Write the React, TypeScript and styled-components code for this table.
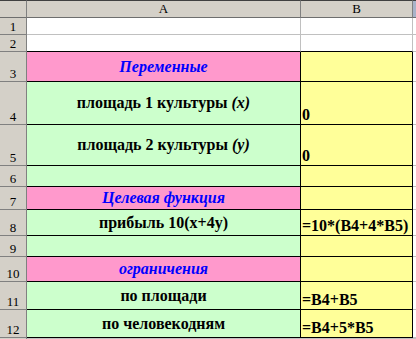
import React from 'react';
import styled, { createGlobalStyle } from 'styled-components';

type Kind = 'blank' | 'title' | 'data';

interface SheetRow {
  n: number;
  height: number;
  kind: Kind;
  a?: React.ReactNode;
  b?: string;
}

const rows: SheetRow[] = [
  { n: 1, height: 17, kind: 'blank' },
  { n: 2, height: 17, kind: 'blank' },
  { n: 3, height: 30, kind: 'title', a: 'Переменные' },
  {
    n: 4,
    height: 43,
    kind: 'data',
    a: (
      <>
        площадь 1 культуры{' '}<i>(x)</i>
      </>
    ),
    b: '0'
  },
  {
    n: 5,
    height: 41,
    kind: 'data',
    a: (
      <>
        площадь 2 культуры{' '}<i>(y)</i>
      </>
    ),
    b: '0'
  },
  { n: 6, height: 21, kind: 'data' },
  { n: 7, height: 23, kind: 'title', a: 'Целевая функция' },
  { n: 8, height: 26, kind: 'data', a: 'прибыль 10(x+4y)', b: '=10*(B4+4*B5)' },
  { n: 9, height: 21, kind: 'data' },
  { n: 10, height: 25, kind: 'title', a: 'ограничения' },
  { n: 11, height: 28, kind: 'data', a: 'по площади', b: '=B4+B5' },
  { n: 12, height: 28, kind: 'data', a: 'по человекодням', b: '=B4+5*B5' }
];

const PINK = '#ff99cc';
const GREEN = '#ccffcc';
const YELLOW = '#ffff99';
const GRID = '#c0c0c0';
const INK = '#000000';

const App: React.FC = () => {
  const template = `18px ${rows.map((r) => `${r.height}px`).join(' ')} 1fr`;

  return (
    <>
      <GlobalStyle />
      <Sheet $rows={template}>
        {/* column headers */}
        <Corner />
        <ColHeader>A</ColHeader>
        <ColHeader>B</ColHeader>
        <NextColHeader />

        {rows.map((row, i) => {
          const next = rows[i + 1];
          const filled = row.kind !== 'blank';
          const bottom = filled || (next && next.kind !== 'blank') ? INK : GRID;
          const aBg = row.kind === 'title' ? PINK : row.kind === 'data' ? GREEN : '#fff';

          return (
            <React.Fragment key={row.n}>
              <RowHeader>{row.n}</RowHeader>
              <Cell
                $bg={aBg}
                $right={filled ? INK : GRID}
                $bottom={bottom}
                $center
                $title={row.kind === 'title'}
              >
                {row.a}
              </Cell>
              <Cell $bg={filled ? YELLOW : '#fff'} $right={filled ? INK : GRID} $bottom={bottom}>
                {row.b}
              </Cell>
              <Spare />
            </React.Fragment>
          );
        })}

        <RowHeader $last />
        <Cell $bg="#fff" $right={GRID} $bottom={GRID} />
        <Cell $bg="#fff" $right={GRID} $bottom={GRID} />
        <Spare />
      </Sheet>
    </>
  );
};

const GlobalStyle = createGlobalStyle`
  html, body {
    margin: 0;
    padding: 0;
    background: #ffffff;
    overflow: hidden;
  }
`;

const Sheet = styled.div<{ $rows: string }>`
  display: grid;
  grid-template-columns: 27px 274px 112px 1fr;
  grid-template-rows: ${(p) => p.$rows};
  width: 416px;
  height: 339px;
  overflow: hidden;
  font-family: 'Liberation Serif', 'Times New Roman', serif;
`;

const HeaderBase = styled.div`
  box-sizing: border-box;
  background: #d4d0c8;
  border-top: 1px solid #404040;
  border-bottom: 1px solid #6e6e6e;
  border-right: 1px solid #808080;
`;

const Corner = styled(HeaderBase)``;

const ColHeader = styled(HeaderBase)`
  display: flex;
  align-items: center;
  justify-content: center;
  font-size: 13px;
  line-height: 16px;
  color: #000;
`;

const NextColHeader = styled(HeaderBase)`
  background: #a9b3c9;
  border-right: none;
`;

const RowHeader = styled.div<{ $last?: boolean }>`
  box-sizing: border-box;
  background: #d4d0c8;
  border-right: 1px solid #808080;
  border-bottom: ${(p) => (p.$last ? 'none' : '1px solid #808080')};
  display: flex;
  align-items: flex-end;
  justify-content: center;
  font-size: 13px;
  line-height: 15px;
  color: #000;
`;

const Cell = styled.div<{
  $bg: string;
  $right: string;
  $bottom: string;
  $center?: boolean;
  $title?: boolean;
}>`
  box-sizing: border-box;
  background: ${(p) => p.$bg};
  border-right: 1px solid ${(p) => p.$right};
  border-bottom: 1px solid ${(p) => p.$bottom};
  display: flex;
  align-items: ${(p) => (p.$center ? 'center' : 'flex-end')};
  justify-content: ${(p) => (p.$center ? 'center' : 'flex-start')};
  padding-left: ${(p) => (p.$center ? '0' : '1px')};
  white-space: pre;
  font-size: 16px;
  line-height: 18px;
  font-weight: bold;
  font-style: ${(p) => (p.$title ? 'italic' : 'normal')};
  color: ${(p) => (p.$title ? '#0000ff' : '#000000')};

  i {
    font-style: italic;
  }
`;

const Spare = styled.div`
  box-sizing: border-box;
  background: #ffffff;
  border-bottom: 1px solid ${GRID};
`;

export default App;
